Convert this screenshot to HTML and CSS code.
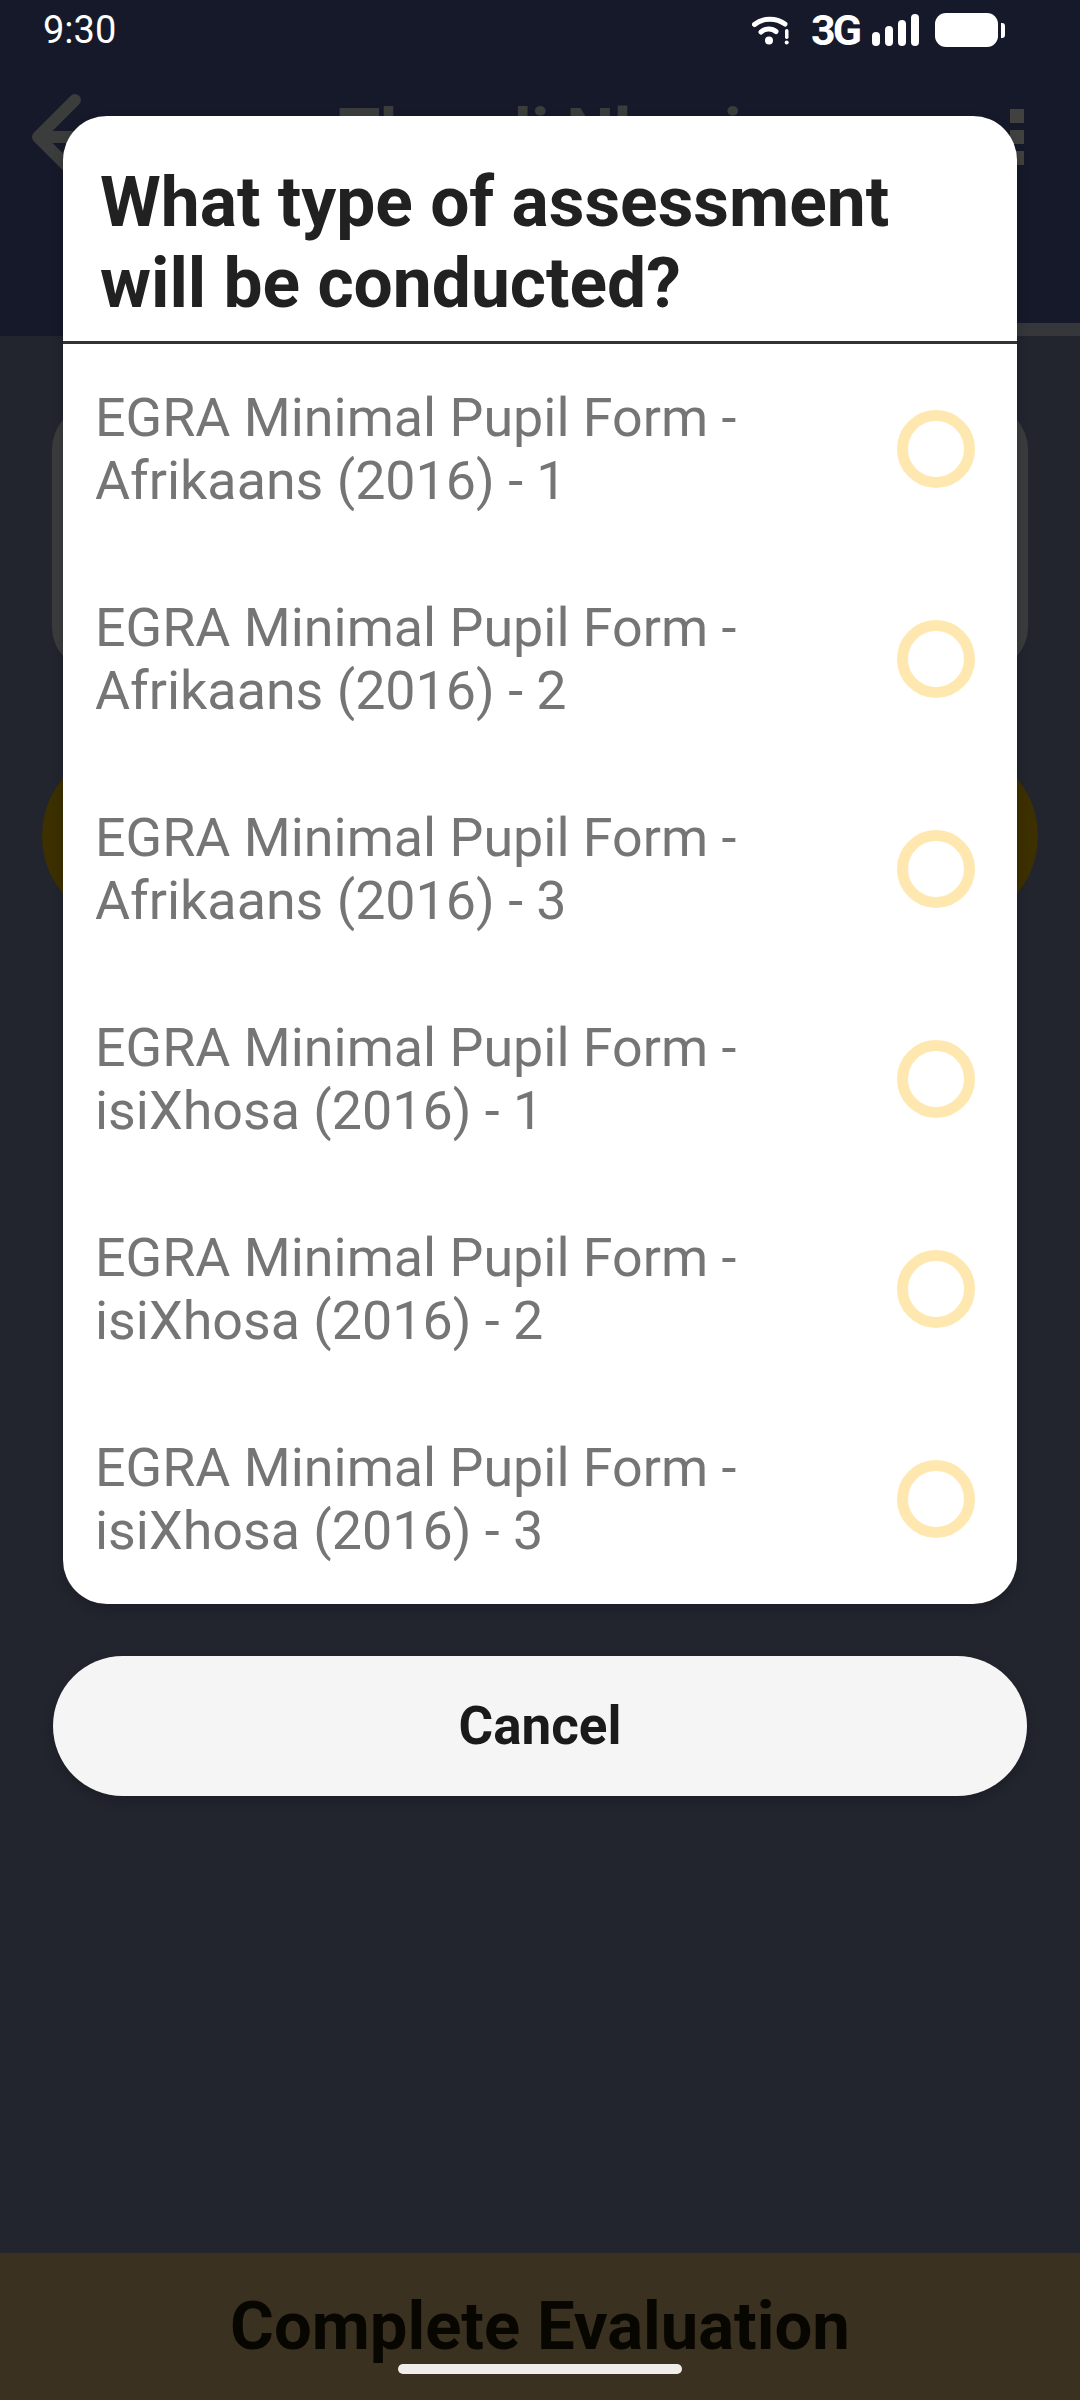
FILE: index.html
```html
<!DOCTYPE html>
<html lang="en">
<head>
<meta charset="utf-8">
<title>Assessment type</title>
<link rel="stylesheet" href="styles.css">
</head>
<body>
<div class="screen">
  <header class="top">
    <div class="status">
      <span class="clock">9:30</span>
      <div class="status-icons">
        <svg class="wifi" width="38" height="30" viewBox="0 0 38 30">
          <path d="M2.500 9.500C11 2.500 24 2.500 33 9" fill="none" stroke="#fff" stroke-width="5" stroke-linecap="round"/>
          <path d="M9 17C13 13 20 13 24 16.500" fill="none" stroke="#fff" stroke-width="5" stroke-linecap="round"/>
          <circle cx="17" cy="25.500" r="4" fill="#fff"/>
          <rect x="33" y="14" width="3.500" height="10" rx="1.700" fill="#fff"/>
          <circle cx="34.700" cy="27.500" r="2" fill="#fff"/>
        </svg>
        <span class="net">3G</span>
        <div class="signal">
          <i class="bar b1"></i><i class="bar b2"></i><i class="bar b3"></i><i class="bar b4"></i>
        </div>
        <div class="battery"><div class="batt-body"></div><div class="batt-nub"></div></div>
      </div>
    </div>
    <div class="toolbar">
      <svg class="back" width="60" height="92" viewBox="0 0 60 92">
        <path d="M54 12L17 49L54 86M17 49H60" fill="none" stroke="#3b3c3c" stroke-width="12" stroke-linecap="round" stroke-linejoin="round"/>
      </svg>
      <span class="name">Thandi Nkosi</span>
      <div class="dots"><i class="dot"></i><i class="dot"></i><i class="dot"></i></div>
    </div>
    <div class="progress"></div>
  </header>
  <main class="content">
    <div class="card"></div>
    <div class="cta"></div>
  </main>
  <footer class="bottom">
    <span class="complete">Complete Evaluation</span>
    <div class="home"></div>
  </footer>

  <div class="overlay">
    <section class="dialog">
      <h1 class="dialog-title">What type of assessment will be conducted?</h1>
      <ul class="options">
        <li class="option"><span class="option-text">EGRA Minimal Pupil Form - Afrikaans (2016) - 1</span><span class="radio"></span></li>
        <li class="option"><span class="option-text">EGRA Minimal Pupil Form - Afrikaans (2016) - 2</span><span class="radio"></span></li>
        <li class="option"><span class="option-text">EGRA Minimal Pupil Form - Afrikaans (2016) - 3</span><span class="radio"></span></li>
        <li class="option"><span class="option-text">EGRA Minimal Pupil Form - isiXhosa (2016) - 1</span><span class="radio"></span></li>
        <li class="option"><span class="option-text">EGRA Minimal Pupil Form - isiXhosa (2016) - 2</span><span class="radio"></span></li>
        <li class="option"><span class="option-text">EGRA Minimal Pupil Form - isiXhosa (2016) - 3</span><span class="radio"></span></li>
      </ul>
    </section>
    <button class="cancel" type="button">Cancel</button>
  </div>
</div>
</body>
</html>
```
FILE: styles.css
```css
* { box-sizing: border-box; }
html, body { margin: 0; padding: 0; }
body { width: 1080px; height: 2400px; overflow: hidden; font-family: Roboto, "Noto Sans", sans-serif; background: #22252e; }
.screen { position: relative; width: 1080px; height: 2400px; display: flex; flex-direction: column; }

.top { height: 336px; background: #161929; display: flex; flex-direction: column; }
.status { height: 60px; display: flex; align-items: center; justify-content: space-between; padding: 0 75px 0 43px; color: #fff; }
.clock { font-size: 38px; line-height: 60px; }
.status-icons { display: flex; align-items: center; }
.wifi { margin-right: 21px; }
.net { font-size: 43px; font-weight: 700; line-height: 60px; width: 44px; letter-spacing: -3px; margin-right: 17px; }
.signal { display: flex; align-items: flex-end; gap: 5px; height: 32px; margin-right: 16px; }
.bar { width: 8px; background: #fff; border-radius: 4px; display: block; }
.b1 { height: 14px; }
.b2 { height: 20px; }
.b3 { height: 26px; }
.b4 { height: 32px; }
.battery { display: flex; align-items: center; gap: 3px; }
.batt-body { width: 63px; height: 34px; background: #fff; border-radius: 11px; }
.batt-nub { width: 4px; height: 15px; background: #fff; border-radius: 0 3px 3px 0; }

.toolbar { position: relative; height: 92px; margin-top: 28px; display: flex; align-items: center; justify-content: center; }
.back { position: absolute; left: 21px; top: 0; }
.name { font-size: 68px; font-weight: 700; color: #3b3c3c; line-height: 54px; }
.dots { position: absolute; left: 1010px; top: 21px; display: flex; flex-direction: column; gap: 7px; }
.dot { width: 14px; height: 14px; background: #414240; display: block; }
.progress { margin-top: auto; height: 13px; width: 540px; align-self: flex-end; background: #35373a; }

.content { flex: 1; display: flex; flex-direction: column; padding: 69px 0 0; }
.card { margin: 0 52px; height: 266px; background: #3a3b3c; border-radius: 44px; }
.cta { margin: 75px 42px 0; height: 180px; background: #3c3000; border-radius: 90px; }

.bottom { position: relative; height: 147px; background: #3a3120; display: flex; justify-content: center; padding-top: 33px; }
.complete { font-size: 67px; font-weight: 700; line-height: 80px; color: #070600; }
.home { position: absolute; left: 398px; top: 111px; width: 284px; height: 10px; border-radius: 5px; background: #f0eeeb; }

.overlay { position: absolute; left: 0; top: 116px; width: 1080px; display: flex; flex-direction: column; align-items: center; }
.dialog { width: 954px; height: 1488px; background: #fff; border-radius: 44px; box-shadow: 0 5px 12px rgba(0,0,0,.18); overflow: hidden; }
.dialog-title { margin: 0; height: 228px; padding: 46px 60px 0 37px; font-size: 69.5px; line-height: 81px; font-weight: 700; color: #212121; border-bottom: 3px solid #333; }
.options { margin: 0; padding: 0; list-style: none; }
.option { height: 210px; display: flex; align-items: center; justify-content: space-between; padding: 0 42px 0 32px; }
.option-text { width: 770px; font-size: 53.8px; line-height: 63px; color: #757575; }
.radio { width: 78px; height: 78px; flex: none; border: 11px solid #ffe8b0; border-radius: 50%; }
.cancel { width: 974px; height: 140px; margin-top: 52px; border: 0; border-radius: 70px; background: #f5f5f5; font-family: inherit; font-size: 53px; font-weight: 700; color: #1a1a1a; box-shadow: 0 5px 12px rgba(0,0,0,.18); }
```
